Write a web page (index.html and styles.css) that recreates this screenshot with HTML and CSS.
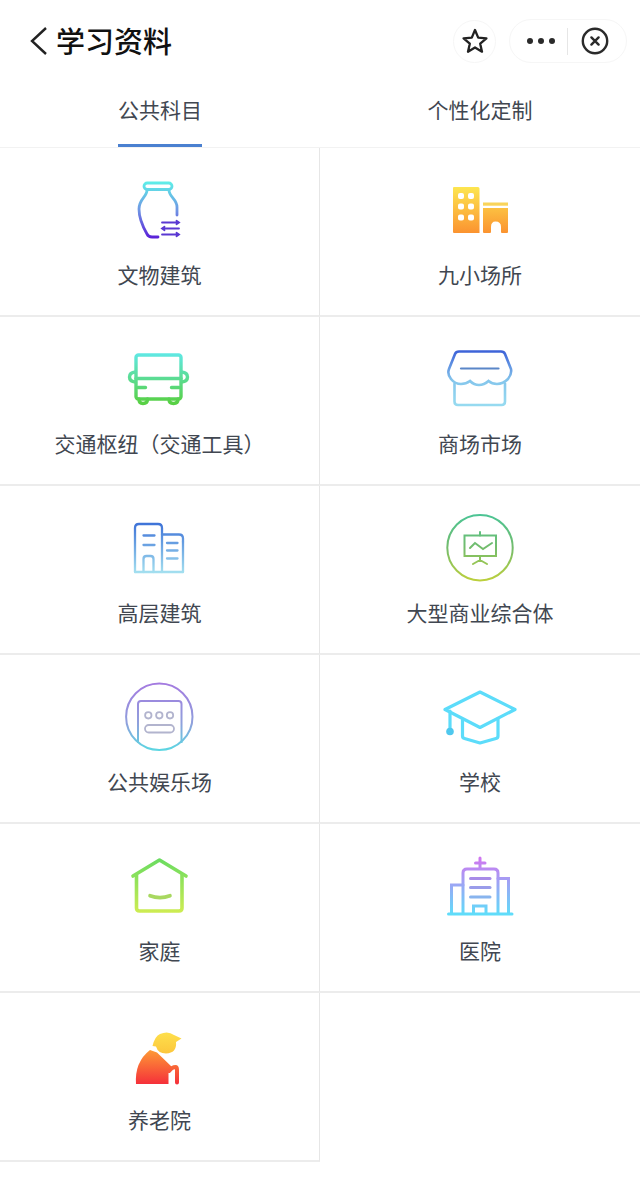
FILE: index.html
```html
<!DOCTYPE html>
<html lang="zh-CN">
<head>
   <meta charset="UTF-8"><title>学习资料</title>
   <link rel="stylesheet" href="styles.css">
</head> <body>

<header class="topbar">
   <svg class="back" viewBox="0 0 20 30" width="20" height="30"><path d="M17 2 L3 15 L17 28" /></svg>
   <h1 class="title">学习资料</h1>
   <div class="star-btn">
      <svg viewBox="0 0 26 26" width="26" height="26"><path d="M13 2 L16.2 9.6 L24.4 10.3 L18.2 15.7 L20 23.7 L13 19.5 L6 23.7 L7.8 15.7 L1.6 10.3 L9.8 9.6 Z" /></svg>
   </div>
   <div class="capsule">
      <span class="dots"><i></i><i></i><i></i></span>
      <span class="sep"></span>
      <svg viewBox="0 0 28 28" width="28" height="28"><circle cx="14" cy="14" r="12.2" /><path d="M10.4 10.4 L17.6 17.6 M17.6 10.4 L10.4 17.6" /></svg>
   </div>
</header>

<nav class="tabs">
   <a class="tab active"><span>公共科目</span></a>
   <a class="tab"><span>个性化定制</span></a>
</nav>

<section class="grid">

   <div class="cell">
      <svg class="icon" viewBox="0 1 120 80">
         <defs><linearGradient id="g-jar" gradientUnits="userSpaceOnUse" x1="0" y1="13" x2="0" y2="69">
            <stop offset="0" stop-color="#5eeee8"/><stop offset=".5" stop-color="#6f96e4"/><stop offset="1" stop-color="#5a1fd8"/>
         </linearGradient></defs>
         <g fill="none" stroke="url(#g-jar)" stroke-width="2.800" stroke-linecap="round">
            <rect x="44" y="14" width="28" height="6.5" rx="3.2"/>
            <path d="M47 21 C47 28 39 30 39 40 C39 50 43 58 47 65 Q48.500 68 52 68 H58"/>
            <path d="M69 21 C69 28 77 30 77 38 V46"/>
         </g>
         <g fill="none" stroke="#5a38d2" stroke-width="1.800" stroke-linecap="round">
            <path d="M62 53.500 H79 M76.500 51.800 L79 53.500 L76.500 55.200"/>
            <path d="M62 59.500 H79 M64.500 57.800 L62 59.500 L64.500 61.200"/>
            <path d="M62 65.500 H79 M76.500 63.800 L79 65.500 L76.500 67.200"/>
         </g>
      </svg>
      <p class="label">文物建筑</p>
   </div>

   <div class="cell">
      <svg class="icon" viewBox="0 0 120 80">
         <defs><linearGradient id="g-shop" gradientUnits="userSpaceOnUse" x1="0" y1="17" x2="0" y2="63">
            <stop offset="0" stop-color="#fde650"/><stop offset="1" stop-color="#fb9330"/>
         </linearGradient></defs>
         <path fill="url(#g-shop)" fill-rule="evenodd" d="M34 17 H58 Q59.500 17 59.500 18.500 V63 H34 Q33 63 33 62 V18 Q33 17 34 17 Z
            M40 23 Q38 23 38 25 V27 Q38 29 40 29 H42 Q44 29 44 27 V25 Q44 23 42 23 Z
            M50 23 Q48 23 48 25 V27 Q48 29 50 29 H52 Q54 29 54 27 V25 Q54 23 52 23 Z
            M40 33.500 Q38 33.500 38 35.500 V37.500 Q38 39.500 40 39.500 H42 Q44 39.500 44 37.500 V35.500 Q44 33.500 42 33.500 Z
            M50 33.500 Q48 33.500 48 35.500 V37.500 Q48 39.500 50 39.500 H52 Q54 39.500 54 37.500 V35.500 Q54 33.500 52 33.500 Z
            M40 44.500 Q38 44.500 38 46.500 V48.500 Q38 50.500 40 50.500 H42 Q44 50.500 44 48.500 V46.500 Q44 44.500 42 44.500 Z
            M50 44.500 Q48 44.500 48 46.500 V48.500 Q48 50.500 50 50.500 H52 Q54 50.500 54 48.500 V46.500 Q54 44.500 52 44.500 Z"/>
         <rect x="63" y="32.500" width="25" height="3.200" fill="#f9d45a"/>
         <path fill="url(#g-shop)" d="M63 38 H88 V62 Q88 63 87 63 H82 Q81 63 81 62 V57 Q81 51.500 75.500 51.500 Q71 51.500 71 57 V62 Q71 63 70 63 H64 Q63 63 63 62 Z"/>
      </svg>
      <p class="label">九小场所</p>
   </div>

   <div class="cell">
      <svg class="icon" viewBox="0 -1 120 80">
         <defs><linearGradient id="g-bus" gradientUnits="userSpaceOnUse" x1="0" y1="14" x2="0" y2="63">
            <stop offset="0" stop-color="#5fe8e2"/><stop offset="1" stop-color="#58d044"/>
         </linearGradient></defs>
         <g fill="none" stroke="url(#g-bus)" stroke-width="3.400" stroke-linecap="round">
            <rect x="36" y="15" width="45" height="44" rx="2.500"/>
            <path d="M36 38.500 H81"/>
            <path d="M38 47.500 H45.500 M71.500 47.500 H79"/>
            <path d="M35.500 32 Q29.500 32.500 29.500 37 Q29.500 41.500 35.500 42"/>
            <path d="M81.500 32 Q87.500 32.500 87.500 37 Q87.500 41.500 81.500 42"/>
            <path d="M39 59 Q39 63.500 43 63.500 Q47.500 63.500 47.500 59"/>
            <path d="M69 59 Q69 63.500 73.500 63.500 Q78 63.500 78 59"/>
         </g>
      </svg>
      <p class="label">交通枢纽（交通工具）</p>
   </div>

   <div class="cell">
      <svg class="icon" viewBox="0 -2 120 80">
         <defs><linearGradient id="g-store" gradientUnits="userSpaceOnUse" x1="0" y1="10" x2="0" y2="64">
            <stop offset="0" stop-color="#3d62d8"/><stop offset=".55" stop-color="#85c6ec"/><stop offset="1" stop-color="#96daf0"/>
         </linearGradient></defs>
         <g fill="none" stroke="url(#g-store)" stroke-width="2.600" stroke-linecap="round">
            <path d="M39 10.500 H81 Q84 10.500 85 13 L91 28 Q92 33 88 38 Q83 43 77 43 Q72 43 68.500 40 Q64 44 59 44 Q54 44 50 40 Q46 43 41 43 Q35 43 31 38 Q27 33 29 28 L35 13 Q36 10.500 39 10.500 Z"/>
            <path d="M34.500 42.500 V60.500 Q34.500 64 38 64 H81.500 Q85 64 85 60.500 V42.500"/>
         </g>
         <path d="M41 27.500 H78.500" stroke="#5a86c8" stroke-width="2.200" stroke-linecap="round"/>
      </svg>
      <p class="label">商场市场</p>
   </div>

   <div class="cell">
      <svg class="icon" viewBox="0 -3 120 80">
         <defs><linearGradient id="g-tower" gradientUnits="userSpaceOnUse" x1="0" y1="13" x2="0" y2="62">
            <stop offset="0" stop-color="#3f74d8"/><stop offset="1" stop-color="#a4e0f0"/>
         </linearGradient></defs>
         <g fill="none" stroke="url(#g-tower)" stroke-width="2.300" stroke-linecap="round">
            <path d="M35 61 V17 Q35 13 39 13 H58 Q62 13 62 17 V61"/>
            <path d="M62 23.500 H79 Q83 23.500 83 27.500 V31"/>
            <path d="M83 31 V61"/>
            <path d="M35 61 H83"/>
            <path d="M43.500 61 V48 Q43.500 45 46.500 45 H50.500 Q53.500 45 53.500 48 V61"/>
            <path d="M43.500 24.500 H54.500 M43.500 34 H54.500"/>
            <path d="M67 32 H77.500 M67 39.500 H77.500 M67 47.500 H77.500"/>
         </g>
      </svg>
      <p class="label">高层建筑</p>
   </div>

   <div class="cell">
      <svg class="icon" viewBox="0 -3 120 80">
         <defs><linearGradient id="g-board" gradientUnits="userSpaceOnUse" x1="0" y1="4" x2="0" y2="70">
            <stop offset="0" stop-color="#4cc494"/><stop offset=".5" stop-color="#74bc6c"/><stop offset="1" stop-color="#bdd03c"/>
         </linearGradient></defs>
         <g fill="none" stroke="url(#g-board)" stroke-width="2" stroke-linecap="round">
            <circle cx="60" cy="36.700" r="32.700"/>
            <rect x="44.500" y="24.500" width="31.500" height="20.500"/>
            <path d="M60 21 V24.500"/>
            <path d="M50 37 L55 32 L63 38 L72 32"/>
            <path d="M60 45 V49 M60 49 L53 53 M60 49 L67 53"/>
         </g>
      </svg>
      <p class="label">大型商业综合体</p>
   </div>

   <div class="cell">
      <svg class="icon" viewBox="0 1 120 80">
         <defs><linearGradient id="g-game" gradientUnits="userSpaceOnUse" x1="0" y1="7" x2="0" y2="74">
            <stop offset="0" stop-color="#a47ae0"/><stop offset=".6" stop-color="#8fa0dc"/><stop offset="1" stop-color="#5cd6e2"/>
         </linearGradient></defs>
         <g fill="none" stroke="url(#g-game)" stroke-width="2">
            <circle cx="59.300" cy="40.700" r="33.200"/>
            <path d="M38 67 V28 Q38 25 41 25 H78.500 Q81.500 25 81.500 28 V67"/>
         </g>
         <g fill="none" stroke="#b2b4ce" stroke-width="1.800">
            <circle cx="48.300" cy="39.300" r="3.200"/>
            <circle cx="59.300" cy="39.300" r="3.200"/>
            <circle cx="70" cy="39.300" r="3.200"/>
            <rect x="45" y="49" width="29" height="7.500" rx="3.700"/>
         </g>
      </svg>
      <p class="label">公共娱乐场</p>
   </div>

   <div class="cell">
      <svg class="icon" viewBox="0 -4 120 80">
         <g fill="none" stroke="#5cdcfa" stroke-width="3.200" stroke-linecap="round" stroke-linejoin="round">
            <path d="M60 11 L95 28.500 L60 46.500 L25 28.500 Z"/>
            <path d="M30 30 V50"/>
            <path d="M42.500 39 V55 Q42.500 57 44.500 57.500 L60 62 L76 57.500 Q78 57 78 55 V37.500"/>
         </g>
         <circle cx="30" cy="50.500" r="3.800" fill="#4fc8ee"/>
      </svg>
      <p class="label">学校</p>
   </div>

   <div class="cell">
      <svg class="icon" viewBox="0 -3 120 80">
         <defs><linearGradient id="g-home" gradientUnits="userSpaceOnUse" x1="0" y1="11" x2="0" y2="63">
            <stop offset="0" stop-color="#6cdc60"/><stop offset="1" stop-color="#cdec52"/>
         </linearGradient></defs>
         <g fill="none" stroke="url(#g-home)" stroke-width="3.600" stroke-linecap="round" stroke-linejoin="round">
            <path d="M33 27 L59.500 11 L86 27"/>
            <path d="M36.500 26 V59 Q36.500 62 39.500 62 H79 Q82 62 82 59 V26"/>
         </g>
         <path d="M50 46.700 Q60 50.500 70 46.700" fill="none" stroke="#a8d860" stroke-width="3.600" stroke-linecap="round"/>
      </svg>
      <p class="label">家庭</p>
   </div>

   <div class="cell">
      <svg class="icon" viewBox="0 -3 120 80">
         <defs><linearGradient id="g-clinic" gradientUnits="userSpaceOnUse" x1="0" y1="9" x2="0" y2="66">
            <stop offset="0" stop-color="#d076f0"/><stop offset="1" stop-color="#5edefa"/>
         </linearGradient></defs>
         <g fill="none" stroke="url(#g-clinic)" stroke-width="3" stroke-linecap="round">
            <path d="M60 9 V19 M55.500 14 H65"/>
            <path d="M43 64 V24 Q43 20 47 20 H74 Q78 20 78 24 V64"/>
            <path d="M43 36 H31.500 V64"/>
            <path d="M78 29.500 H88.500 V64"/>
            <path d="M28.500 65 H92"/>
            <path d="M53.500 64 V57 H66 V64"/>
         </g>
         <g stroke-width="3" stroke-linecap="round">
            <path d="M50.500 29.500 H70" stroke="#a88ce8"/>
            <path d="M50.500 38.500 H70" stroke="#9a9cea"/>
            <path d="M50.500 48 H70" stroke="#88b4ee"/>
         </g>
      </svg>
      <p class="label">医院</p>
   </div>

   <div class="cell">
      <svg class="icon" viewBox="0 -7 120 80">
         <defs>
            <linearGradient id="g-hat" gradientUnits="userSpaceOnUse" x1="0" y1="10" x2="0" y2="32">
               <stop offset="0" stop-color="#fee04c"/><stop offset="1" stop-color="#fcc63c"/>
            </linearGradient>
            <linearGradient id="g-body" gradientUnits="userSpaceOnUse" x1="0" y1="28" x2="0" y2="62">
               <stop offset="0" stop-color="#fd9a35"/><stop offset="1" stop-color="#f5303a"/>
            </linearGradient>
         </defs>
         <path fill="url(#g-hat)" d="M52.500 24 Q55 14 60 12 Q68 8.500 74 13 L81.500 16.500 L76 20 Q77 31 66 31.500 Q58 31.500 56 24.500 Z"/>
         <path fill="url(#g-body)" d="M36 62 Q34.500 40 50 28 L57 30.500 L72 45 L68.500 48.500 V62 Z"/>
         <path fill="none" stroke="url(#g-body)" stroke-width="4" stroke-linecap="round" d="M69 49 Q72 45 75.500 45 Q77 45 77 48 V60.500"/>
      </svg>
      <p class="label">养老院</p>
   </div>

</section>

</body> </html>
```
FILE: styles.css
```css
html, body {
   margin: 0;
   background: #fff;
}

body {
   font-family: "Noto Sans CJK SC", "Liberation Sans", sans-serif;
   color: #414751;
}

.topbar {
   display: flex;
   align-items: center;
   height: 82px;
   padding: 0 13px 0 29px;
   box-sizing: border-box;
}

.back {
   margin-right: 7px;
}

.back path {
   fill: none;
   stroke: #222;
   stroke-width: 2.4;
}

.title {
   flex: 1;
   margin: 0 0 2px;
   font-size: 29px;
   font-weight: 500;
   line-height: 40px;
   color: #111;
}

.star-btn {
   display: flex;
   align-items: center;
   justify-content: center;
   width: 43px;
   height: 43px;
   margin-right: 13px;
   border: 1px solid #f6f6f6;
   border-radius: 50%;
   box-sizing: border-box;
}

.star-btn path {
   fill: none;
   stroke: #222;
   stroke-width: 2.300;
   stroke-linejoin: round;
}

.capsule {
   display: flex;
   align-items: center;
   width: 118px;
   height: 44px;
   padding-left: 17px;
   border: 1px solid #f6f6f6;
   border-radius: 22px;
   box-sizing: border-box;
}

.capsule circle, .capsule path {
   fill: none;
   stroke: #2a2a2a;
   stroke-width: 2.400;
}

.capsule path {
   stroke-linecap: round;
}

.dots {
   display: flex;
   gap: 5px;
}

.dots i {
   width: 6px;
   height: 6px;
   border-radius: 50%;
   background: #2a2a2a;
}

.sep {
   width: 1px;
   height: 27px;
   margin: 0 13px 0 12px;
   background: #e6e6e6;
}

.tabs {
   display: flex;
   height: 66px;
   border-bottom: 1px solid #f2f2f2;
   box-sizing: border-box;
}

.tab {
   flex: 1;
   display: flex;
   justify-content: center;
   font-size: 21px;
   line-height: 28px;
}

.tab span {
   display: block;
   height: 62px;
   padding-top: 13px;
   box-sizing: border-box;
}

.tab.active span {
   height: 65px;
   border-bottom: 3px solid #4a80d0;
}

.grid {
   display: grid;
   grid-template-columns: 320px 320px;
   grid-auto-rows: 169px;
}

.cell {
   display: flex;
   flex-direction: column;
   align-items: center;
   padding-top: 22px;
   border-bottom: 2px solid #ececec;
   box-sizing: border-box;
}

.cell:nth-child(odd) {
   border-right: 1px solid #e6e6e6;
}

.icon {
   display: block;
   width: 120px;
   height: 80px;
}

.label {
   margin: 10px 0 0;
   font-size: 21px;
   line-height: 28px;
   white-space: nowrap;
}
```
